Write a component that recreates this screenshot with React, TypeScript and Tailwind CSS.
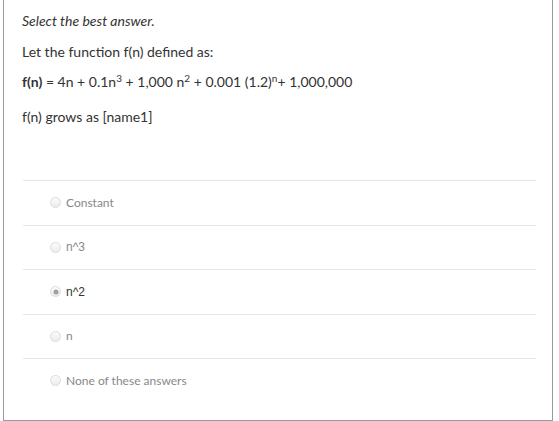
import React from "react";

const options = [
  { label: "Constant", font: "lato", selected: false },
  { label: "n^3", font: "arial", selected: false },
  { label: "n^2", font: "arial", selected: true },
  { label: "n", font: "lato", selected: false },
  { label: "None of these answers", font: "lato", selected: false },
];

function Radio({ selected }: { selected: boolean }) {
  return (
    <span className="relative inline-block w-[11px] h-[11px] rounded-full border border-[#dcdcdc] bg-gradient-to-b from-[#fbfbfb] to-[#ececec] shrink-0">
      {selected && (
        <span className="absolute left-1/2 top-1/2 -translate-x-1/2 -translate-y-1/2 w-[5px] h-[5px] rounded-full bg-[#a0a0a0]" />
      )}
    </span>
  );
}

export default function App() {
  return (
    <div className="w-[559px] h-[421px] bg-white overflow-hidden">
      <div className="ml-[3px] w-[550px] h-[421px] border-l border-r border-b border-[#9a9a9a] font-['Lato',sans-serif] text-[#333] text-[14px]">
        <div className="pl-[18px] pt-[11px]">
          <p className="italic leading-[20px]">Select the best answer.</p>
          <p className="leading-[20px] mt-[11px]">Let the function f(n) defined as:</p>
          <p className="leading-[20px] mt-[10px]">
            <b className="font-bold">f(n)</b> = 4n + 0.1n<sup className="text-[10px]">3</sup> + 1,000 n<sup className="text-[10px]">2</sup> + 0.001 (1.2)<sup className="text-[10px]">n</sup>+ 1,000,000
          </p>
          <p className="leading-[20px] mt-[15px]">f(n) grows as [name1]</p>
        </div>
        <div className="mt-[53px] ml-[19px] w-[513px]">
          {options.map((o, i) => (
            <div
              key={i}
              className="h-[44.5px] flex items-center gap-[5px] pl-[27px] border-t border-[#e6e6e6]"
            >
              <Radio selected={o.selected} />
              <span
                className={`text-[12px] ${o.font === "arial" ? "font-['Liberation_Sans',sans-serif]" : "font-['Lato',sans-serif]"} ${o.selected ? "text-[#333]" : "text-[#888]"}`}
              >
                {o.label}
              </span>
            </div>
          ))}
        </div>
      </div>
    </div>
  );
}
